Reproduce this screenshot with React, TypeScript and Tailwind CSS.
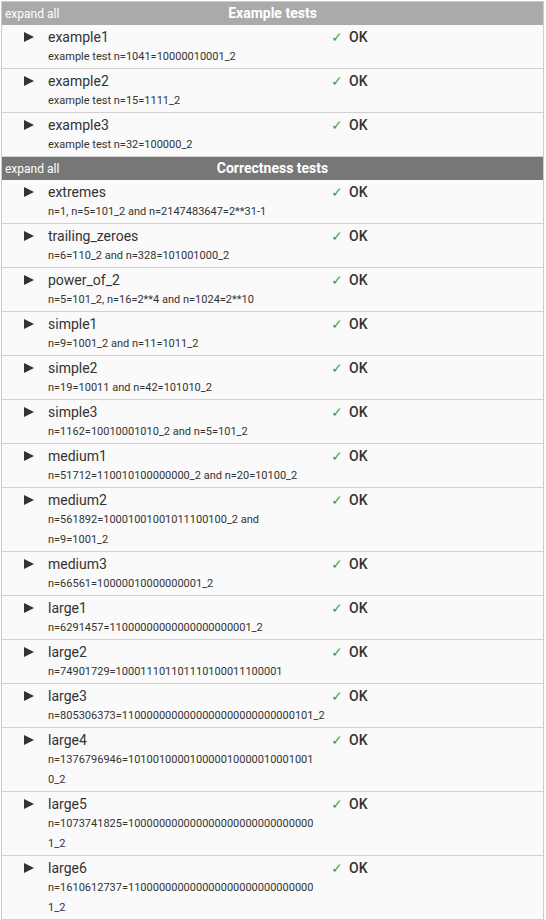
import React from 'react';

interface TestRow {
  name: string;
  desc: string[];
}

const exampleTests: TestRow[] = [
  { name: 'example1', desc: ['example test n=1041=10000010001_2'] },
  { name: 'example2', desc: ['example test n=15=1111_2'] },
  { name: 'example3', desc: ['example test n=32=100000_2'] },
];

// line breaks are given by hand, they follow the original wrapping
const correctnessTests: TestRow[] = [
  { name: 'extremes', desc: ['n=1, n=5=101_2 and n=2147483647=2**31-1'] },
  { name: 'trailing_zeroes', desc: ['n=6=110_2 and n=328=101001000_2'] },
  { name: 'power_of_2', desc: ['n=5=101_2, n=16=2**4 and n=1024=2**10'] },
  { name: 'simple1', desc: ['n=9=1001_2 and n=11=1011_2'] },
  { name: 'simple2', desc: ['n=19=10011 and n=42=101010_2'] },
  { name: 'simple3', desc: ['n=1162=10010001010_2 and n=5=101_2'] },
  { name: 'medium1', desc: ['n=51712=110010100000000_2 and n=20=10100_2'] },
  { name: 'medium2', desc: ['n=561892=10001001001011100100_2 and', 'n=9=1001_2'] },
  { name: 'medium3', desc: ['n=66561=10000010000000001_2'] },
  { name: 'large1', desc: ['n=6291457=11000000000000000000001_2'] },
  { name: 'large2', desc: ['n=74901729=100011101101110100011100001'] },
  { name: 'large3', desc: ['n=805306373=11' + '0'.repeat(26) + '101_2'] },
  { name: 'large4', desc: ['n=1376796946=101001000010000010000010001001', '0_2'] },
  { name: 'large5', desc: ['n=1073741825=1' + '0'.repeat(29), '1_2'] },
  { name: 'large6', desc: ['n=1610612737=11' + '0'.repeat(28), '1_2'] },
];

function Arrow() {
  return (
    <svg width="10" height="10" viewBox="0 0 10 10" className="mt-[5px] ml-[22px]">
      <polygon points="0,0 10,5 0,10" fill="#333" />
    </svg>
  );
}

function Row({ row }: { row: TestRow }) {
  return (
    <div className="flex border-b border-[#d0d0d0] bg-[#fafafa] pt-[2px] pb-[1px] text-[#333]">
      <div className="w-[46px] shrink-0">
        <Arrow />
      </div>
      <div className="w-[258px] shrink-0">
        <div className="text-[14px] leading-[20px]">{row.name}</div>
        {row.desc.map((line, i) => (
          <div key={i} className="text-[11px] leading-[20px] whitespace-nowrap">
            {line}
          </div>
        ))}
      </div>
      <div className="pl-[25px] text-[14px] leading-[20px] flex gap-[6px]">
        <span className="text-[#3aa63a]">✓</span>
        <span className="font-medium">OK</span>
      </div>
    </div>
  );
}

function Section({ title, rows, headerBg }: { title: string; rows: TestRow[]; headerBg: string }) {
  return (
    <div>
      <div className={`relative h-[23px] ${headerBg} text-white flex items-center justify-center`}>
        <span className="absolute left-[3px] top-[4px] text-[12px] leading-[16px]">expand all</span>
        <span className="text-[14px] font-bold">{title}</span>
      </div>
      {rows.map((r) => (
        <Row key={r.name} row={r} />
      ))}
    </div>
  );
}

export default function App() {
  return (
    <div className="bg-white h-[920px] overflow-hidden pt-[1px] pl-[1px]" style={{ fontFamily: 'Roboto, "Liberation Sans", sans-serif' }}>
      <div className="w-[543px] border-x border-t border-[#cccccc]">
        <Section title="Example tests" rows={exampleTests} headerBg="bg-[#aaaaaa]" />
        <Section title="Correctness tests" rows={correctnessTests} headerBg="bg-[#777777]" />
      </div>
    </div>
  );
}
